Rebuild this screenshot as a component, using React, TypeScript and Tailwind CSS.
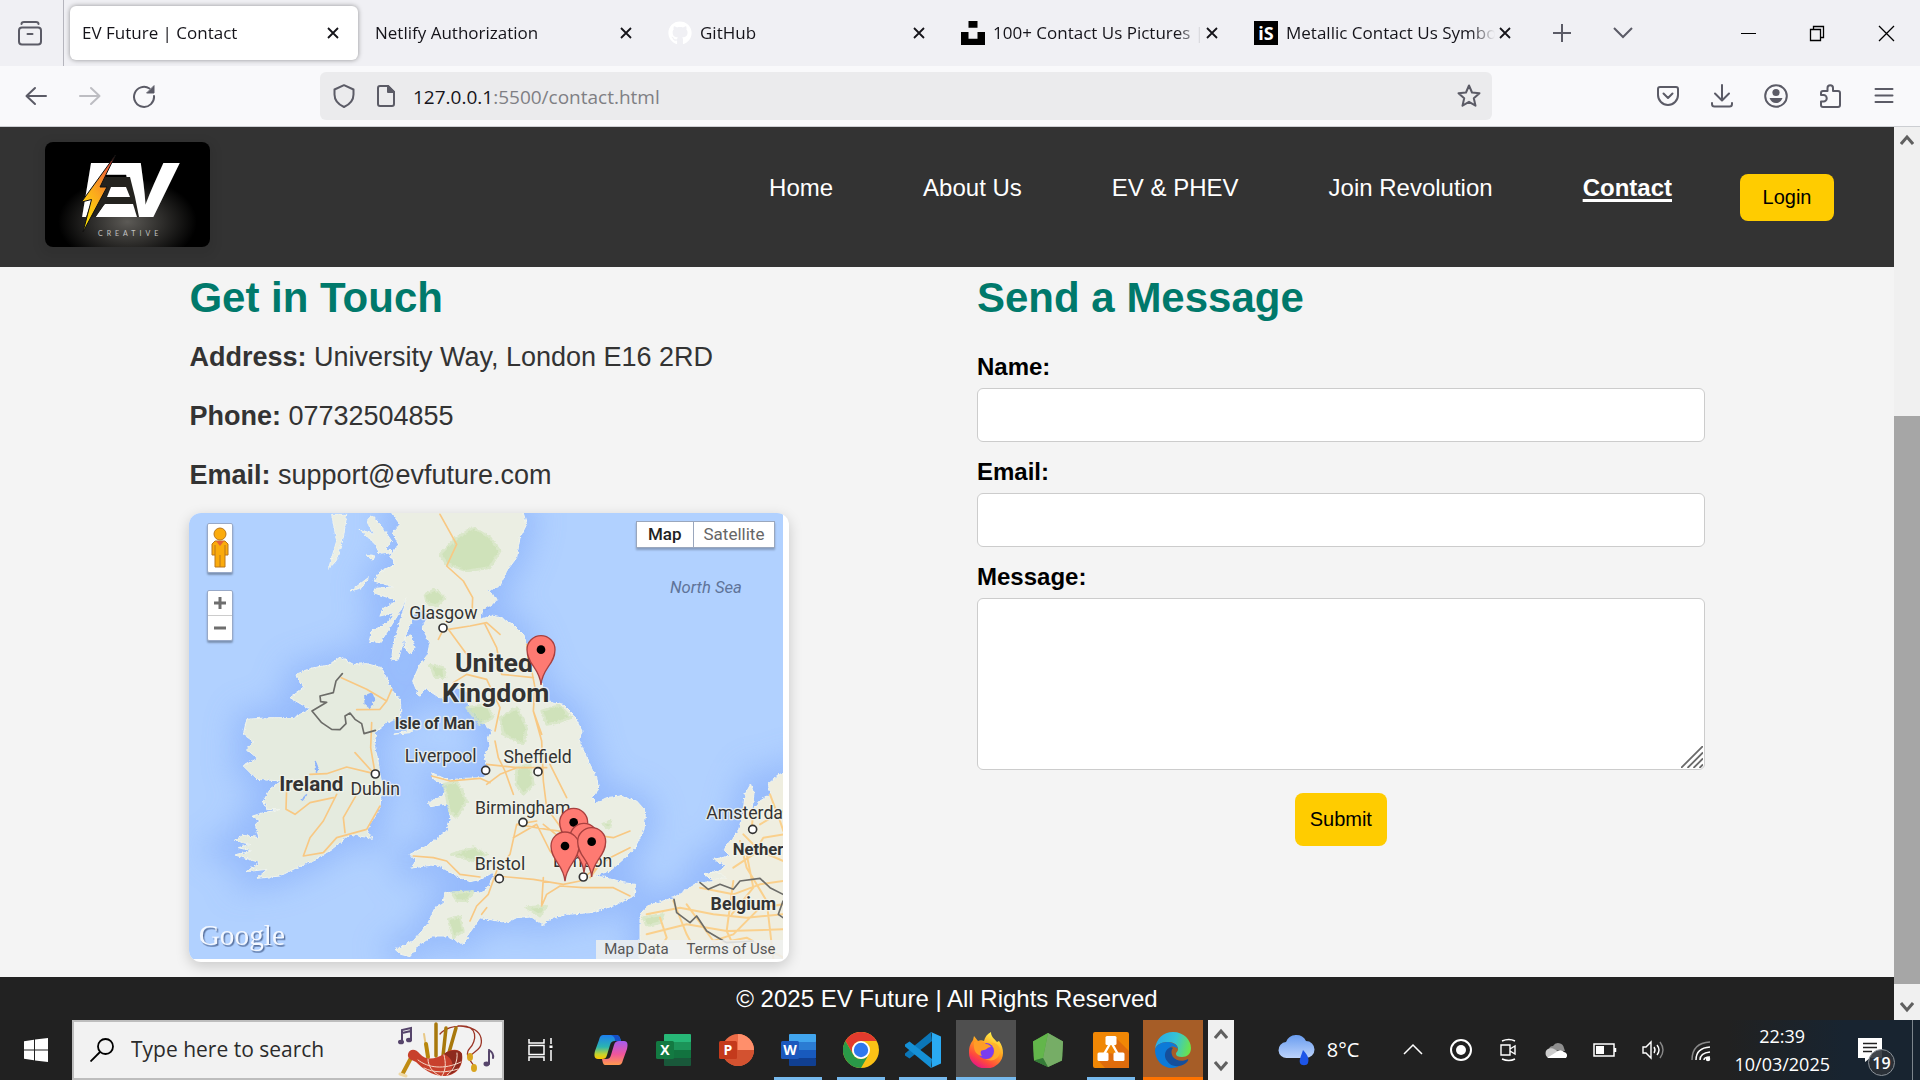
import type { ReactNode } from "react";
import { FaGithub } from "react-icons/fa";

const ui = "font-['Open_Sans','Noto_Sans',sans-serif]";

/* ---------- browser chrome ---------- */

function CloseX() {
  return (
    <svg viewBox="0 0 12 12" className="size-3" fill="none" stroke="#15141a" strokeWidth="1.8">
      <path d="M1 1l10 10M11 1L1 11" />
    </svg>
  );
}

type TabInfo = { title: string; icon?: ReactNode; active?: boolean };

const tabs: TabInfo[] = [
  { title: "EV Future | Contact", active: true },
  { title: "Netlify Authorization" },
  { title: "GitHub", icon: <FaGithub className="size-6 text-white" /> },
  {
    title: "100+ Contact Us Pictures | Download",
    icon: (
      <svg viewBox="0 0 24 24" className="size-6">
        <path d="M7.5 0h9v6.8h-9zM0 11h7.5v6.8h9V11H24v13H0z" />
      </svg>
    ),
  },
  {
    title: "Metallic Contact Us Symbols",
    icon: (
      <svg viewBox="0 0 24 24" className="size-6">
        <rect width="24" height="24" fill="#000" />
        <text x="12" y="19" textAnchor="middle" fontSize="18" fontWeight="700" fill="#fff" fontFamily="Open Sans, sans-serif">iS</text>
      </svg>
    ),
  },
];

function Tab({ title, icon, active }: TabInfo) {
  return (
    <div
      className={
        active
          ? "flex h-[54px] w-[288px] items-center rounded-md bg-white pr-[19px] pl-3 shadow-[0_0_5px_rgba(0,0,0,0.4)]"
          : "flex h-[54px] w-[288px] items-center rounded-md pr-[19px] pl-3"
      }
    >
      {icon && <span className="mr-2 shrink-0">{icon}</span>}
      <span className="min-w-0 flex-1 overflow-hidden text-[17px] whitespace-nowrap text-[#15141a] [mask-image:linear-gradient(to_right,#000_88%,transparent)]">
        {title}
      </span>
      <button aria-label={`Close ${title}`} className="ml-1 shrink-0">
        <CloseX />
      </button>
    </div>
  );
}

function TabBar() {
  return (
    <div className={`flex h-[66px] items-center bg-[#f0f0f4] ${ui}`}>
      <div className="flex h-full w-16 items-center justify-center border-r border-[#b5b5bd] pr-1">
        <button aria-label="Firefox View">
          <svg viewBox="0 0 26 26" className="size-[26px]" fill="none" stroke="#5b5b66" strokeWidth="2" strokeLinecap="round">
            <path d="M4.5 4q0-2 2.500-2h12q2.500 0 2.500 2" />
            <rect x="2" y="7.500" width="22" height="17" rx="3" />
            <path d="M10.500 14h5" />
          </svg>
        </button>
      </div>
      <div className="ml-[6px] flex gap-[5px]">
        {tabs.map((t) => (
          <Tab key={t.title} {...t} />
        ))}
      </div>
      <div className="ml-[22px] flex gap-[41px]">
        <button aria-label="New tab">
          <svg viewBox="0 0 20 20" className="size-5" stroke="#5b5b66" strokeWidth="2">
            <path d="M10 1v18M1 10h18" />
          </svg>
        </button>
        <button aria-label="List all tabs">
          <svg viewBox="0 0 20 20" className="size-5" fill="none" stroke="#5b5b66" strokeWidth="2">
            <path d="M1 5l9 9 9-9" />
          </svg>
        </button>
      </div>
      <div className="mr-[25px] ml-auto flex items-center gap-[52px]">
        <button aria-label="Minimize">
          <svg viewBox="0 0 17 17" className="size-[17px]" stroke="#000" strokeWidth="1">
            <path d="M1 8.500h15" />
          </svg>
        </button>
        <button aria-label="Restore">
          <svg viewBox="0 0 17 17" className="size-[17px]" fill="none" stroke="#000" strokeWidth="1.300">
            <path d="M1.500 4.500h10v11h-10zM4.500 4.500v-3h10v11h-3" />
          </svg>
        </button>
        <button aria-label="Close window">
          <svg viewBox="0 0 17 17" className="size-[17px]" stroke="#000" strokeWidth="1.300">
            <path d="M1 1l15 15M16 1L1 16" />
          </svg>
        </button>
      </div>
    </div>
  );
}

function ToolIcon({ label, color = "#5b5b66", children }: { label: string; color?: string; children: ReactNode }) {
  return (
    <button aria-label={label} className="block">
      <svg viewBox="0 0 24 24" className="size-6" fill="none" stroke={color} strokeWidth="2" strokeLinecap="round" strokeLinejoin="round">
        {children}
      </svg>
    </button>
  );
}

function Toolbar() {
  return (
    <div className={`flex h-[61px] items-center border-b border-[#ccced2] bg-[#f9f9fb] px-6 ${ui}`}>
      <div className="flex gap-[30px]">
        <ToolIcon label="Back">
          <path d="M22 12H3M11 4l-8.500 8 8.500 8" />
        </ToolIcon>
        <ToolIcon label="Forward" color="#bdbdc2">
          <path d="M2 12h19M13 4l8.500 8-8.500 8" />
        </ToolIcon>
        <ToolIcon label="Reload">
          <path d="M17.500 4.500A10 10 0 1 0 22 12" />
          <path d="M22 2v7h-7z" fill="#5b5b66" strokeWidth="1" />
        </ToolIcon>
      </div>
      <div className="ml-[164px] flex h-12 flex-1 items-center rounded-md bg-[#ebebed] pr-[11px] pl-3">
        <ToolIcon label="Tracking protection">
          <path d="M12 1.200l9.500 4.300v5C21.500 16 17.500 20.500 12 23 6.500 20.500 2.500 16 2.500 10.500v-5z" />
        </ToolIcon>
        <div className="ml-[18px]">
          <ToolIcon label="Site information">
            <path d="M6 2h8l6 6v12q0 2-2 2H6q-2 0-2-2V4q0-2 2-2z" />
            <path d="M14 2l6 6h-6z" fill="#5b5b66" />
          </ToolIcon>
        </div>
        <div className="ml-[15px] flex-1 pt-0.5 text-[19px] text-[#7f7f84]">
          <span className="text-[#15141a]">127.0.0.1</span>:5500/contact.html
        </div>
        <ToolIcon label="Bookmark this page">
          <path d="M12 1.500l3 7 7.500.7-5.700 5 1.700 7.500L12 17.800l-6.500 3.900 1.700-7.500-5.700-5L9 8.500z" />
        </ToolIcon>
      </div>
      <div className="ml-[164px] flex gap-[30px]">
        <ToolIcon label="Save to Pocket">
          <path d="M4 3h16q2 0 2 2v6a10 10 0 0 1-20 0V5q0-2 2-2z" />
          <path d="M7.500 9.500L12 14l4.500-4.500" />
        </ToolIcon>
        <ToolIcon label="Downloads">
          <path d="M12 1v15M5 9.500l7 7 7-7M2 19v1q0 2.500 2.500 2.500h15Q22 22.500 22 20v-1" />
        </ToolIcon>
        <ToolIcon label="Account">
          <circle cx="12" cy="12" r="10.800" />
          <circle cx="12" cy="8.500" r="3.600" fill="#5b5b66" stroke="none" />
          <path d="M5.500 14h13c-1 3-3.500 5-6.500 5s-5.500-2-6.500-5z" fill="#5b5b66" stroke="none" />
        </ToolIcon>
        <ToolIcon label="Extensions">
          <path d="M3 11V9q0-2 2-2h4.500V4a2.700 2.700 0 0 1 5.500 0v3h5q2 0 2 2v12q0 2-2 2H5q-2 0-2-2v-3.500h2.500a3 3 0 0 0 0-6.500z" />
        </ToolIcon>
        <ToolIcon label="Menu">
          <path d="M3.500 5h17M3.500 11.500h17M3.500 18h17" />
        </ToolIcon>
      </div>
    </div>
  );
}

/* ---------- site ---------- */

function EvLogo() {
  return (
    <svg viewBox="0 0 165 105" className="mt-[15px] h-[105px] w-[165px] self-start rounded-lg shadow-[0_4px_8px_6px_rgba(0,0,0,0.06)]" role="img" aria-label="EV Creative">
      <defs>
        <radialGradient id="glow" cx="0.500" cy="0.760" r="0.420">
          <stop offset="0" stopColor="#5c5a56" />
          <stop offset="1" stopColor="#000" />
        </radialGradient>
        <linearGradient id="bolt" x1="0.800" y1="0" x2="0.200" y2="1">
          <stop offset="0" stopColor="#e8473a" />
          <stop offset="0.500" stopColor="#fba51f" />
          <stop offset="1" stopColor="#ffe600" />
        </linearGradient>
      </defs>
      <rect width="165" height="105" fill="url(#glow)" />
      <text x="37" y="75" fontFamily="Inter, sans-serif" fontWeight="900" fontStyle="italic" fontSize="74" fill="#fff">
        <tspan>E</tspan>
        <tspan x="72">V</tspan>
      </text>
      <path d="M55 35h30l5 20 4 20h-5L84 62H60l-9 13H41z" fill="#24231f" />
      <path d="M66 45h15l4 10H62z" fill="#fff" />
      <path d="M60 62h28l4 13H51z" fill="#fff" />
      <path d="M70.500 13L36.500 60l10-2.500L38 90l24-45h-7z" fill="url(#bolt)" stroke="#111" strokeWidth="1" />
      <text x="53" y="94" fontFamily="Lato, sans-serif" fontSize="7" fill="#c4c4c4" className="tracking-[4px]">CREATIVE</text>
    </svg>
  );
}

const navLinks = ["Home", "About Us", "EV & PHEV", "Join Revolution"];

function SiteHeader() {
  return (
    <header className="flex h-[140px] items-center bg-[#333] pr-[60px] pl-[45px]">
      <EvLogo />
      <nav className="ml-auto flex gap-[90px] pb-[18px] text-2xl leading-7 text-white">
        {navLinks.map((l) => (
          <a key={l} href="#">{l}</a>
        ))}
        <a href="#" className="font-bold underline decoration-3 underline-offset-3">Contact</a>
      </nav>
      <button className="ml-[68px] h-[47px] w-[94px] rounded-lg bg-[#ffcc00] text-xl text-black">Login</button>
    </header>
  );
}

const GB =
  "M635 36L660 70L638 95L655 130L632 165L645 190L600 212L582 240L640 258L585 262L580 275L625 290L650 300L610 322L600 345L640 335L625 365L575 390L568 420L600 425L630 380L655 340L680 290L662 355L640 430L635 475L655 475L668 430L690 370L712 315L745 345L726 380L750 425L742 462L720 490L698 540L718 588L735 562L782 592L830 560L862 572L866 618L900 655L935 690L925 710L930 735L912 760L925 800L912 830L850 832L805 838L755 815L762 835L802 857L788 885L745 905L752 917L802 908L812 950L800 990L740 1035L690 1060L708 1080L692 1102L768 1090L840 1130L870 1142L905 1134L945 1110L925 1160L900 1176L860 1172L795 1175L788 1210L765 1220L742 1270L700 1320L645 1345L662 1360L690 1367L715 1332L760 1305L800 1305L852 1330L866 1300L900 1250L980 1265L1010 1250L1050 1245L1090 1273L1105 1255L1160 1240L1230 1235L1300 1215L1362 1185L1367 1150L1330 1145L1285 1130L1240 1125L1290 1110L1330 1075L1362 1045L1392 985L1397 930L1370 900L1320 885L1280 890L1250 905L1235 890L1256 865L1250 830L1220 770L1198 720L1206 690L1180 640L1150 610L1105 600L1085 550L1030 400L1000 370L960 350L935 345L900 355L908 330L940 310L950 295L925 270L960 255L980 210L1010 170L1020 110L1040 70L1025 20L635 20Z";
const IRELAND =
  "M480 468L520 490L560 488L605 500L628 550L638 570L662 600L662 650L620 665L588 692L582 730L592 770L600 820L606 850L600 920L560 985L577 1012L510 1000L455 1045L400 1080L350 1100L300 1125L230 1132L262 1105L198 1112L240 1085L165 1062L215 1050L175 1040L210 1030L163 1018L190 1003L237 1010L225 970L240 960L218 945L250 935L302 925L262 926L250 900L272 862L305 840L230 835L190 795L232 772L200 745L218 720L190 700L200 655L270 650L340 650L390 625L330 590L372 560L348 520L400 500L450 492Z";
const EUROPE =
  "M1380 1400V1240L1402 1215L1480 1190L1555 1145L1600 1142L1572 1118L1615 1110L1640 1095L1600 1075L1650 1065L1630 1045L1675 990L1690 930L1695 880L1712 850L1722 880L1715 930L1740 900L1772 880L1765 848L1800 820L1840 800V1400Z";
const ISLES =
  "M455 40L500 40L490 110L468 180L445 205L470 120ZM540 85L580 100L560 60L575 42L600 70L635 120L620 140L635 155L600 160L585 130ZM512 270L565 230L545 260ZM675 410L690 400L705 440L690 460L675 440ZM560 160L585 165L578 180ZM1575 1120L1610 1112L1640 1130L1600 1135ZM640 700L700 685L690 695Z";
const WOODS =
  "M780 160L830 110L880 80L930 110L960 150L930 200L860 210L800 190ZM735 280L765 265L795 290L770 315L740 305ZM750 490L790 500L795 530L765 530ZM860 620L920 610L940 650L900 670ZM960 650L1010 620L1040 680L1030 730L970 700ZM1085 630L1140 612L1172 650L1130 665L1100 670ZM792 850L830 840L860 900L830 950L808 930ZM815 1060L880 1040L920 1060L880 1080ZM1010 800L1050 790L1060 850L1030 880L1008 850ZM815 1175L880 1172L860 1200L830 1198ZM805 1255L840 1245L850 1290L820 1310ZM1040 1220L1100 1215L1080 1245ZM1390 1250L1450 1240L1440 1265L1400 1275ZM1270 970L1290 960L1295 975L1280 980Z";
const ROADS =
  "M780 40L830 130L800 195L850 240L878 290L876 340M805 385L870 375L920 365L960 400M805 385L860 460M775 415L790 385M484 530L560 565L620 600L600 625L530 626M620 600L635 565M575 665L572 740L585 815M390 820L440 818L500 798L570 815M525 755L575 810M470 880L430 960L390 1010L370 1065L430 1055L470 1010L560 985L600 915M320 860L318 925L345 940L390 905L460 890M530 880L490 950L495 995M755 825L810 840L900 832L930 845M700 1065L760 1070L800 1080L840 1120L900 1128M870 1260L890 1215L925 1180L950 1110L990 1060L1010 970L1070 960M820 545L860 520L920 535L960 620L945 690M945 720L955 770L975 810L1000 880M920 790L1010 800M1060 630L1085 720L1090 840L1100 920L1150 990M1110 790L1160 890M915 370L950 440L965 520L1060 530M1040 430L1065 560L1060 630L1085 700M950 1125L1060 1135L1150 1150L1200 1140L1210 1130M1000 1010L1070 970L1110 1050L1160 1110M1090 970L1140 1010L1260 1090L1230 1130M1210 1160L1140 1155L1100 1180L1085 1215M1210 1160L1300 1160L1350 1185M1210 1130L1290 1070L1350 1040M1230 1000L1300 1010L1350 990M1090 1130L1085 1210M920 1220L905 1240M920 850L960 820L1010 800L1100 800M1010 970L1100 985L1210 1000";
const EURO_ROADS =
  "M1400 1240L1500 1220L1600 1240L1700 1250L1810 1240M1480 1200L1520 1300L1560 1374M1400 1300L1520 1270L1640 1290L1810 1285M1660 1140L1640 1290L1680 1374M1690 1000L1740 1050L1810 1080M1715 985L1720 930M1680 1020L1700 1100L1760 1200L1780 1374M1810 1000L1750 1010L1720 1060L1660 1100M1560 1160L1660 1180L1740 1150L1810 1140M1600 1330L1700 1310L1810 1370M1770 880L1800 960L1810 990M1740 970L1810 930M1420 1374L1460 1310L1440 1250M1655 1240L1720 1160L1700 1060M1520 1210L1600 1320L1660 1300L1740 1220L1810 1210";

type Place = { t: string; x: number; y: number; s: number; bold?: boolean };
const places: Place[] = [
  { t: "Glasgow", x: 790, y: 353, s: 53 },
  { t: "United", x: 942, y: 514, s: 80, bold: true },
  { t: "Kingdom", x: 947, y: 604, s: 80, bold: true },
  { t: "Isle of Man", x: 764, y: 685, s: 48, bold: true },
  { t: "Ireland", x: 394, y: 870, s: 62, bold: true },
  { t: "Dublin", x: 586, y: 882, s: 53 },
  { t: "Liverpool", x: 782, y: 782, s: 53 },
  { t: "Sheffield", x: 1073, y: 786, s: 53 },
  { t: "Birmingham", x: 1028, y: 938, s: 53 },
  { t: "Bristol", x: 960, y: 1107, s: 53 },
  { t: "London", x: 1208, y: 1099, s: 53 },
  { t: "Belgium", x: 1690, y: 1227, s: 53, bold: true },
];

const dots = [
  [789, 381], [586, 819], [917, 808], [1074, 812], [1029, 964], [958, 1133], [1210, 1128], [1718, 985],
];

function Pin({ x, y }: { x: number; y: number }) {
  return (
    <g transform={`translate(${x} ${y})`}>
      <path d="M0 0C-3-50-42-62-42-106a42 42 0 0 1 84 0C42-62 3-50 0 0z" fill="#fe7a72" stroke="#a8403f" strokeWidth="4" />
      <circle cy="-106" r="13" fill="#000" />
    </g>
  );
}

function MapCard() {
  return (
    <div className="relative mt-[22px] h-[449px] w-[600px] overflow-hidden rounded-xl bg-white shadow-[0_4px_14px_rgba(0,0,0,0.18)]">
      <svg viewBox="27 36 1782 1338" className="h-[446px] w-[594px]" role="img" aria-label="Map of the United Kingdom and Ireland" fontFamily="Roboto, sans-serif">
        <defs>
          <filter id="shore" x="-20%" y="-20%" width="140%" height="140%">
            <feGaussianBlur stdDeviation="45" />
          </filter>
          <filter id="coast" x="-5%" y="-5%" width="110%" height="110%">
            <feTurbulence type="fractalNoise" baseFrequency="0.110" numOctaves="2" seed="4" />
            <feDisplacementMap in="SourceGraphic" scale="11" xChannelSelector="R" yChannelSelector="G" />
          </filter>
        </defs>
        <rect x="27" y="36" width="1782" height="1338" fill="#b1d1ff" />
        <g filter="url(#shore)" fill="#8db3fb" stroke="#8db3fb" strokeWidth="60" opacity="0.750">
          <path d={GB} />
          <path d={IRELAND} />
          <path d={EUROPE} />
        </g>
        <g filter="url(#coast)">
          <g strokeLinejoin="round" stroke="#f1f4ec" strokeWidth="3">
            <path d={GB} fill="#ebeee3" />
            <path d={IRELAND} fill="#e5ebdf" />
            <path d={EUROPE} fill="#efeee0" />
            <path d={ISLES} fill="#ebeee3" />
          </g>
          <path d={WOODS} fill="#c9e0b0" opacity="0.800" stroke="#d6e6c4" strokeWidth="8" strokeLinejoin="round" />
          <path d="M555 585l20-8 8 20-15 22-12-10zM405 780l8 20-4 15M910 330l20-12M365 900l15-20" fill="#8db3fb" stroke="#8db3fb" strokeWidth="5" />
        </g>
        <g fill="none" strokeLinejoin="round" strokeLinecap="round">
          <path d={ROADS} stroke="#f8c883" strokeWidth="5" />
          <path d={EURO_ROADS} stroke="#fad08c" strokeWidth="6" />
          <path
            d="M487 518L468 540L460 575L420 585L422 602L440 604L396 630L425 665L455 685L480 686L498 668L495 645L510 636L525 655L545 668L552 698L586 688M1482 1195L1490 1235L1530 1265L1550 1245L1580 1290L1640 1325L1720 1320M1560 1145L1585 1165L1620 1150L1660 1165L1680 1140L1740 1132L1770 1160L1809 1180M1809 1200L1795 1240L1809 1250"
            stroke="#6c6c68"
            strokeWidth="5"
          />
        </g>
        {dots.map(([cx, cy]) => (
          <circle key={`${cx}-${cy}`} cx={cx} cy={cy} r="12" fill="#fff" stroke="#333" strokeWidth="5" />
        ))}
        <g fill="#333" stroke="#f3f5ee" strokeWidth="8" strokeOpacity="0.800" paintOrder="stroke" strokeLinejoin="round">
          {places.map((p) => (
            <text key={p.t} x={p.x} y={p.y} fontSize={p.s} fontWeight={p.bold ? 700 : 400} textAnchor="middle">{p.t}</text>
          ))}
          <text x="1579" y="954" fontSize="53">Amsterda</text>
          <text x="1658" y="1062" fontSize="50" fontWeight="700">Nether</text>
        </g>
        <text x="1470" y="276" fontSize="50" fontStyle="italic" fill="#5f7499">North Sea</text>
        <Pin x={1083} y={552} />
        <Pin x={1181} y={1070} />
        <Pin x={1212} y={1115} />
        <Pin x={1155} y={1141} />
        <Pin x={1235} y={1128} />
        <text x="56" y="1331" fontSize="88" fontFamily="Liberation Serif, serif" fill="#f4f8ff" className="[filter:drop-shadow(4px_5px_2px_rgb(90_115_160))]">Google</text>
      </svg>
      <button aria-label="Street View" className="absolute top-[10px] left-[18px] flex h-[50px] w-[26px] items-center justify-center rounded-xs border border-[#98a9c8] bg-white shadow-[0_2px_2px_rgba(0,0,0,0.3)]">
        <svg viewBox="0 0 18 42" className="h-[42px] w-[18px]" stroke="#b9761c" fill="#fbab0c">
          <path d="M4 14h10l3 3v11h-3v12H4V28H1V17z" />
          <path d="M5 14h8l-4 5z" fill="#e2603b" stroke="none" />
          <path d="M9 28v12M4 18v10M14 18v10" />
          <circle cx="9" cy="7" r="6" />
        </svg>
      </button>
      <div className="absolute top-[77px] left-[18px] flex h-[51px] w-[26px] flex-col divide-y divide-[#ccc] rounded-xs border border-[#98a9c8] bg-white shadow-[0_2px_2px_rgba(0,0,0,0.3)]">
        <button aria-label="Zoom in" className="flex flex-1 items-center justify-center">
          <svg viewBox="0 0 12 12" className="size-3" stroke="#6e6e6e" strokeWidth="3"><path d="M6 0v12M0 6h12" /></svg>
        </button>
        <button aria-label="Zoom out" className="flex flex-1 items-center justify-center">
          <svg viewBox="0 0 12 12" className="size-3" stroke="#6e6e6e" strokeWidth="3"><path d="M0 6h12" /></svg>
        </button>
      </div>
      <div className="absolute top-2 right-[14px] flex h-[27px] items-center divide-x divide-[#9aa7bd] border border-[#9aa7bd] bg-white font-[Roboto,sans-serif] text-[17px] leading-[25px] shadow-[0_2px_2px_rgba(0,0,0,0.25)]">
        <button className="px-[11px] font-medium text-[#222]">Map</button>
        <button className="px-[10px] text-[#666]">Satellite</button>
      </div>
      <div className="absolute right-[6px] bottom-[3px] flex h-[19px] items-center gap-[18px] bg-[#eef0ee]/85 px-2 font-[Roboto,sans-serif] text-[15px] text-[#555]">
        <a href="#">Map Data</a>
        <a href="#">Terms of Use</a>
      </div>
    </div>
  );
}

function ContactInfo() {
  return (
    <section>
      <h2 className="text-[42px] leading-12 font-bold text-[#00796b]">Get in Touch</h2>
      <div className="mt-5 flex flex-col gap-7 text-[27px] leading-[31px] text-[#333]">
        <p><strong>Address:</strong> University Way, London E16 2RD</p>
        <p><strong>Phone:</strong> 07732504855</p>
        <p><strong>Email:</strong> support@evfuture.com</p>
      </div>
      <MapCard />
    </section>
  );
}

function MessageForm() {
  const label = "mb-[7px] block text-2xl leading-7 font-bold text-black";
  const field = "mb-4 block h-[54px] w-full rounded-md border border-[#ccc] bg-white px-3 text-xl";
  return (
    <section>
      <h2 className="text-[42px] leading-12 font-bold text-[#00796b]">Send a Message</h2>
      <form className="mt-[31px]" onSubmit={(e) => e.preventDefault()}>
        <label htmlFor="name" className={label}>Name:</label>
        <input id="name" type="text" className={field} />
        <label htmlFor="email" className={label}>Email:</label>
        <input id="email" type="email" className={field} />
        <label htmlFor="message" className={label}>Message:</label>
        <div className="relative">
          <textarea id="message" className="block h-[172px] w-full resize-none rounded-md border border-[#ccc] bg-white px-3 py-2 text-xl" />
          <svg viewBox="0 0 22 22" className="pointer-events-none absolute right-[2px] bottom-[2px] size-[22px]" stroke="#6a6a6a" strokeWidth="1.800">
            <path d="M0 22L22 0M6.500 22L22 6.500M12.500 22L22 12.500M18.500 22l3.500-3.500" />
          </svg>
        </div>
        <button type="submit" className="mx-auto mt-[23px] block h-[53px] rounded-lg bg-[#ffcc00] px-[15px] pb-0.5 text-xl text-black">Submit</button>
      </form>
    </section>
  );
}

function ArrowGlyph({ up }: { up?: boolean }) {
  return (
    <svg viewBox="0 0 14 12" className="h-3 w-3.5" fill="none" stroke="#606060" strokeWidth="3">
      <path d={up ? "M1 10l6-7 6 7" : "M1 2l6 7 6-7"} />
    </svg>
  );
}

function ScrollBar() {
  return (
    <div className="flex w-[26px] shrink-0 flex-col bg-[#f0f0f0]">
      <button aria-label="Scroll up" className="flex h-[26px] items-center justify-center"><ArrowGlyph up /></button>
      <div className="flex-[263]" />
      <div className="flex-[568] bg-[#a6a6a6]" />
      <div className="flex-[10]" />
      <button aria-label="Scroll down" className="flex h-[26px] items-center justify-center"><ArrowGlyph /></button>
    </div>
  );
}

/* ---------- taskbar ---------- */

function Bagpipes() {
  return (
    <svg viewBox="0 0 98 56" className="h-14 w-[98px]" fill="none" strokeLinecap="round">
      <path d="M4 20V8l9-2v12M4 11l9-2" stroke="#56456b" strokeWidth="2" />
      <ellipse cx="3" cy="20" rx="3" ry="2.300" fill="#56456b" />
      <ellipse cx="11" cy="18" rx="3" ry="2.300" fill="#56456b" />
      <path d="M91 28v14M91 28q5 3 4 8" stroke="#56456b" strokeWidth="2" />
      <ellipse cx="88.500" cy="42" rx="3" ry="2.400" fill="#56456b" />
      <path d="M42 12C52 0 80 2 83 16s-12 14-11 20M60 4c22-2 18 16 12 22s0 12 4 18" stroke="#9b3526" strokeWidth="1.300" />
      <path d="M26 12l4 26" stroke="#e8c887" strokeWidth="2" />
      <path d="M28 22l2 13" stroke="#b8860b" strokeWidth="4" />
      <path d="M38 2v32M48 6l-3 28M58 6l-8 28" stroke="#a8780c" strokeWidth="3.500" />
      <path d="M14 34L5 51" stroke="#c08c14" strokeWidth="4" />
      <path d="M2 52l6 2" stroke="#f0d9a5" strokeWidth="3" />
      <path d="M10 32c2-6 8-5 12 0 6 7 16 5 24 0 6-5 15-6 18 0 2 12-6 22-18 22S24 46 18 40c-4-2-9-3-8-8z" fill="#c8402c" />
      <path d="M46 32c6-5 16-5 18 0 1 11-5 19-14 21 7-8 6-16-4-21z" fill="#8e2a1e" />
      <path d="M20 38c10 8 26 10 43 2M26 46c10 5 22 5 34 1M30 37c0 7 4 13 12 17M46 33c2 8 2 15-2 21M59 31c1 8-3 17-10 22" stroke="#f6d9c8" strokeWidth="1" />
      <ellipse cx="72" cy="35" rx="3" ry="4" fill="#d9a520" />
      <ellipse cx="76" cy="46" rx="3" ry="4" fill="#d9a520" />
    </svg>
  );
}

function OfficeIcon({ letter, dark, shades, round }: { letter: string; dark: string; shades: string[]; round?: boolean }) {
  return (
    <svg viewBox="0 0 36 36" className="size-9">
      {round ? (
        <g>
          <circle cx="20" cy="18" r="16" fill={shades[0]} />
          <path d="M20 2a16 16 0 0 1 16 16H20z" fill={shades[1]} />
          <path d="M4 18h32a16 16 0 0 1-32 0z" fill={shades[2]} />
        </g>
      ) : (
        <g>
          <rect x="9" y="2" width="27" height="8.500" rx="1" fill={shades[0]} />
          <rect x="9" y="10" width="27" height="8" fill={shades[1]} />
          <rect x="9" y="18" width="27" height="8" fill={shades[2]} />
          <rect x="9" y="26" width="27" height="8" rx="1" fill={shades[3]} />
        </g>
      )}
      <rect x="1" y="9" width="18" height="18" rx="1.500" fill={dark} />
      <text x="10" y="23" textAnchor="middle" fontSize="14" fontWeight="700" fill="#fff" fontFamily="Open Sans, sans-serif">{letter}</text>
    </svg>
  );
}

function Copilot() {
  return (
    <svg viewBox="0 0 36 36" className="size-9">
      <defs>
        <linearGradient id="cpa" x1="0" y1="0" x2="0" y2="1">
          <stop offset="0" stopColor="#1d7ff0" />
          <stop offset="0.500" stopColor="#2bb5b0" />
          <stop offset="0.800" stopColor="#c4d42f" />
          <stop offset="1" stopColor="#ffc400" />
        </linearGradient>
        <linearGradient id="cpb" x1="0" y1="0" x2="0" y2="1">
          <stop offset="0" stopColor="#a45cf0" />
          <stop offset="0.550" stopColor="#f0569c" />
          <stop offset="1" stopColor="#ff9a4d" />
        </linearGradient>
      </defs>
      <path d="M11 3h12c3 0 4 2 5 6h-6c-3 0-4 1-5 4l-3 10c-1 3-2 4-5 4H5c-4 0-4-4-3-8L6 8c1-4 2-5 5-5z" fill="url(#cpa)" />
      <path d="M25 33H13c-3 0-3-2-4-6h4c3 0 4-1 5-4l3-10c1-3 2-4 5-4h5c4 0 4 4 3 8l-4 11c-1 4-2 5-5 5z" fill="url(#cpb)" />
      <path d="M18 3h5c3 0 4 2 5 6h-6c0-3-1-5-4-6z" fill="#1550c8" />
    </svg>
  );
}

function Chrome() {
  return (
    <svg viewBox="0 0 36 36" className="size-9">
      <circle cx="18" cy="18" r="18" fill="#fbc116" />
      <path d="M2.400 9A18 18 0 0 1 33.600 9H18a9 9 0 0 0-7.800 13.500z" fill="#e33b2e" />
      <path d="M2.400 9A18 18 0 0 0 18 36l7.800-13.500A9 9 0 0 1 10.200 22.500z" fill="#2a9a48" />
      <circle cx="18" cy="18" r="9" fill="#fff" />
      <circle cx="18" cy="18" r="7.200" fill="#2f78ee" />
    </svg>
  );
}

function VsCode() {
  return (
    <svg viewBox="0 0 36 36" className="size-9">
      <path d="M26 0l1 9L4.500 26.500 0 23.500v-2z" fill="#0b76b8" />
      <path d="M26 36l1-9L4.500 9.500 0 12.500v2z" fill="#1590d6" />
      <path d="M26 0l10 4.500v27L26 36q1-1 1-3V3q0-2-1-3z" fill="#2aaaf2" />
    </svg>
  );
}

function Firefox() {
  return (
    <svg viewBox="0 0 36 36" className="size-9">
      <defs>
        <linearGradient id="ffx" x1="0.800" y1="0.100" x2="0.300" y2="1">
          <stop offset="0" stopColor="#fff04a" />
          <stop offset="0.400" stopColor="#ffa01f" />
          <stop offset="0.750" stopColor="#ff4a3c" />
          <stop offset="1" stopColor="#e61587" />
        </linearGradient>
      </defs>
      <path d="M1 20C1 14 3 11 5 8l1-4 4 5c2-1 4-1 6 0 1-4 3-7 7-9 0 5 3 6 6 10l2-1c3 4 4 8 4 12a17 15.500 0 0 1-34 0z" fill="url(#ffx)" />
      <circle cx="18" cy="19" r="8" fill="#7a3df0" />
      <path d="M6 10c4-2 10-1 12 2 2 0 4 1 5 3-4 0-4 3-7 3-4 0-4 3-2 6-6-1-9-6-8-14z" fill="#ff9d27" />
      <path d="M22 11c4 2 6 6 4 11-1 4-5 6-9 5 8 4 15-1 15-8 0-4-3-9-10-8z" fill="#ffb02a" opacity="0.800" />
    </svg>
  );
}

function Gem() {
  return (
    <svg viewBox="0 0 36 36" className="size-9">
      <path d="M18 1l15 8.500-1 19L18 35 4 28.500l-1-19z" fill="#519b44" />
      <path d="M18 1l15 8.500-1 19L18 35l-5-9z" fill="#76ad66" />
      <path d="M18 1L3 9.500l1 19L13 26z" fill="#63b64b" />
      <path d="M4 28.500L13 26l5 9z" fill="#357a37" />
    </svg>
  );
}

function DrawIo() {
  return (
    <svg viewBox="0 0 36 36" className="size-9">
      <rect width="36" height="36" rx="2" fill="#f08705" />
      <path d="M22 5l14 14v17H12l-7-8 10-7 8 1z" fill="#df6c0c" />
      <path d="M18 10l-8 14M18 10l8 14" stroke="#fff" strokeWidth="2.400" />
      <rect x="12.500" y="4" width="11" height="9" rx="1.500" fill="#fff" />
      <rect x="4.500" y="20.500" width="11" height="8.500" rx="1.500" fill="#fff" />
      <rect x="20.500" y="20.500" width="11" height="8.500" rx="1.500" fill="#fff" />
    </svg>
  );
}

function Edge() {
  return (
    <svg viewBox="0 0 36 36" className="size-9">
      <defs>
        <linearGradient id="edg" x1="0" y1="0.300" x2="1" y2="0.500">
          <stop offset="0" stopColor="#29a8e8" />
          <stop offset="0.550" stopColor="#35c4d6" />
          <stop offset="1" stopColor="#6be34c" />
        </linearGradient>
      </defs>
      <path d="M0 17C1 7 8 0 18 0c11 0 18 8 18 16 0 6-4 9-9 9-4 0-6-1-6-3s2-2 2-5c0-4-4-7-10-7C7 10 2 12 0 17z" fill="url(#edg)" />
      <path d="M0 18c1-5 6-8 12-8 5 0 10 2 11 7-2-2-5-3-7-2-5 2-6 8-3 13 3 4 8 6 13 4-3 3-6 4-9 4C7 36 0 28 0 18z" fill="#0c7ad8" />
      <path d="M14 16c-5 3-5 9-2 13 4 6 12 7 19 2q3-3 2-4c-5 3-12 2-15-2-2-3-2-7 0-9-1-1-3-1-4 0z" fill="#154f9c" />
    </svg>
  );
}

type AppEntry = { name: string; icon: ReactNode; state: "idle" | "open" | "focus" | "alert" };
const apps: AppEntry[] = [
  { name: "Copilot", icon: <Copilot />, state: "idle" },
  { name: "Excel", icon: <OfficeIcon letter="X" dark="#137a42" shades={["#27b877", "#1c9459", "#12733f", "#19583a"]} />, state: "idle" },
  { name: "PowerPoint", icon: <OfficeIcon letter="P" dark="#c43a1c" shades={["#ed6c47", "#ff8f6b", "#d35230"]} round />, state: "idle" },
  { name: "Word", icon: <OfficeIcon letter="W" dark="#1b58bd" shades={["#41a5ee", "#2b7cd3", "#185abd", "#103f91"]} />, state: "open" },
  { name: "Chrome", icon: <Chrome />, state: "open" },
  { name: "Visual Studio Code", icon: <VsCode />, state: "open" },
  { name: "Firefox", icon: <Firefox />, state: "focus" },
  { name: "Node.js", icon: <Gem />, state: "idle" },
  { name: "draw.io", icon: <DrawIo />, state: "open" },
  { name: "Edge", icon: <Edge />, state: "alert" },
];

const appBox = {
  idle: "",
  open: "",
  focus: "bg-[#4f4f4f]",
  alert: "bg-[#a65d27]",
};
const appLine = {
  idle: "h-[3px] w-12",
  open: "h-[3px] w-12 bg-[#76b9ed]",
  focus: "h-[3px] w-full bg-[#76b9ed]",
  alert: "h-[3px] w-full bg-[#ff7300]",
};

function Tray() {
  const svg = "size-6";
  return (
    <div className="ml-auto flex items-center">
      <svg viewBox="0 0 38 36" className="h-9 w-[38px]">
        <defs>
          <linearGradient id="cloud" x1="0" y1="0" x2="0" y2="1">
            <stop offset="0" stopColor="#6a9df0" />
            <stop offset="1" stopColor="#bcd3fb" />
          </linearGradient>
        </defs>
        <path d="M9 26a8 8 0 0 1-1-16A11 11 0 0 1 28 9a8.500 8.500 0 0 1 0 17z" fill="url(#cloud)" />
        <path d="M25 18c6 6 6 10 5 13s-7 3-8 0 1-7 3-13z" fill="#1d55e8" />
      </svg>
      <span className="ml-[11px] text-xl text-white">8°C</span>
      <div className="ml-[42px] flex items-center gap-6">
        <svg viewBox="0 0 24 24" className={svg} fill="none" stroke="#fff" strokeWidth="1.500"><path d="M3 16l9-9 9 9" /></svg>
        <svg viewBox="0 0 24 24" className={svg}><circle cx="12" cy="12" r="10" fill="none" stroke="#fff" strokeWidth="2" /><circle cx="12" cy="12" r="5" fill="#fff" /></svg>
        <svg viewBox="0 0 24 24" className={svg} fill="none" stroke="#fff" strokeWidth="1.400"><path d="M5 3q7-3 13 0M5 21q7 3 13 0M4 7h9v10H4zM13 11l5-3v8l-5-3" /></svg>
        <svg viewBox="0 0 24 24" className={svg}><path d="M4 12a4 4 0 0 1 4-4 6 6 0 0 1 11 2l1 3z" fill="#8f8f8f" /><path d="M4 20a5 5 0 0 1 0-9.500q3-1 6 1l5 3z" fill="#ccc" /><path d="M2 20l11-7q3-2 6 1a3.500 3.500 0 0 1 2 6z" fill="#fff" /></svg>
        <svg viewBox="0 0 24 24" className={svg}><path d="M1 6h20v12H1zM22.500 10v4" fill="none" stroke="#fff" strokeWidth="1.500" /><path d="M3 8h8v8H3z" fill="#fff" /></svg>
        <svg viewBox="0 0 24 24" className={svg} fill="none" stroke="#fff" strokeWidth="1.400"><path d="M2 9h3l5-5v16l-5-5H2z" /><path d="M13 9q2 3 0 6M16 7q4 5 0 10" /><path d="M19 4q6 8 0 16" stroke="#888" /></svg>
        <svg viewBox="0 0 24 24" className={svg} fill="none" stroke="#fff" strokeWidth="1.500"><path d="M3 22Q3 5 21 4" stroke="#888" /><path d="M7 22q0-12 14-13M11 22q0-7 10-8M15 22q0-3 6-3" /><circle cx="19" cy="21" r="1.500" fill="#fff" /></svg>
      </div>
      <div className="ml-[21px] text-center text-lg leading-7 text-white">
        <div>22:39</div>
        <div>10/03/2025</div>
      </div>
      <button aria-label="Notifications" className="relative ml-7 size-6">
        <svg viewBox="0 0 24 24" className={svg}><path d="M0 0h24v20H12l-5 4v-4H0z" fill="#fff" /><path d="M5 5.500h14M5 9.500h14M5 13.500h9" stroke="#222" strokeWidth="1.300" /></svg>
        <span className="absolute top-[11px] left-[10px] flex size-[27px] items-center justify-center rounded-full border border-[#8b9299] bg-[#2c3238]/90 text-base font-semibold text-white">19</span>
      </button>
      <div className="ml-[30px] h-[60px] w-2 border-l border-[#7d858c]" />
    </div>
  );
}

function Taskbar() {
  return (
    <div className={`flex h-[60px] items-center bg-[linear-gradient(to_right,#212121_90%,#182430_96%)] ${ui}`}>
      <button aria-label="Start" className="flex w-[72px] justify-center">
        <svg viewBox="0 0 24 24" className="size-6" fill="#fff"><path d="M0 3.200l10-1.400v9.700H0zM11 1.600L24 0v11.500H11zM0 12.500h10v9.700L0 20.800zM11 12.500h13V24l-13-1.600z" /></svg>
      </button>
      <div className="flex h-[60px] w-[432px] items-center border-2 border-[#bdbdbd] bg-[#f2f2f2] pl-4">
        <svg viewBox="0 0 24 24" className="size-6 shrink-0" fill="none" stroke="#000" strokeWidth="1.800"><circle cx="15.500" cy="8.500" r="7.500" /><path d="M10 14L.5 23.500" /></svg>
        <input aria-label="Search" placeholder="Type here to search" className="ml-[17px] min-w-0 flex-1 bg-transparent text-[21px] text-[#222] outline-none placeholder:text-[#2b2b2b]" />
        <span className="mr-[6px] shrink-0"><Bagpipes /></span>
      </div>
      <button aria-label="Task View" className="ml-6">
        <svg viewBox="0 0 26 26" className="size-[26px]" fill="none" stroke="#fff" strokeWidth="1.500"><path d="M1 2v4h15V2M1 24v-4h15v4M1 8.500h15v9H1zM23 1v6M23 13v11" /><rect x="21.500" y="8.500" width="3" height="2.500" fill="#fff" stroke="none" /></svg>
      </button>
      <div className="ml-[27px] flex w-[622px] justify-between">
        {apps.map((a) => (
          <button key={a.name} aria-label={a.name} className={`flex h-[60px] w-[60px] flex-col items-center ${appBox[a.state]}`}>
            <span className="flex flex-1 items-center pt-[3px]">{a.icon}</span>
            <span className={appLine[a.state]} />
          </button>
        ))}
      </div>
      <div className="ml-[5px] flex h-[60px] w-[26px] flex-col items-center justify-between bg-[#f0f0f0] py-2">
        <button aria-label="Scroll apps up"><ArrowGlyph up /></button>
        <button aria-label="Scroll apps down"><ArrowGlyph /></button>
      </div>
      <Tray />
    </div>
  );
}

export default function App() {
  return (
    <div className="flex min-h-screen flex-col">
      <TabBar />
      <Toolbar />
      <div className="flex flex-1">
        <div className="flex min-w-0 flex-1 flex-col bg-[#f4f4f4] font-['Liberation_Sans',Arial,sans-serif]">
          <SiteHeader />
          <main className="mx-auto grid w-4/5 flex-1 grid-cols-2 gap-[60px] pt-[7px] pb-[15px]">
            <ContactInfo />
            <MessageForm />
          </main>
          <footer className="bg-[#222] pt-2 pb-[7px] text-center text-2xl leading-7 text-white">
            © 2025 EV Future | All Rights Reserved
          </footer>
        </div>
        <ScrollBar />
      </div>
      <Taskbar />
    </div>
  );
}
